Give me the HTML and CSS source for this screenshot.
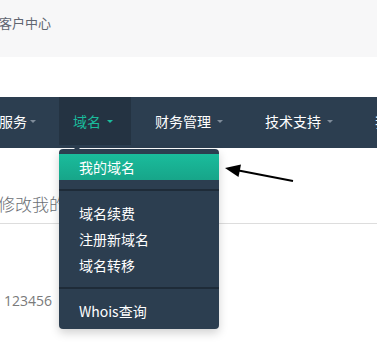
FILE: index.html
```html
<!DOCTYPE html>
<html lang="zh">
<head>
<meta charset="utf-8">
<title>域名</title>
<link rel="stylesheet" href="styles.css">
</head>
<body>
<div class="topbar"><span class="crumb">客户中心</span></div>
<div class="gap"></div>
<nav class="nav">
  <ul class="menu">
    <li class="item first"><span>服务</span><i class="caret"></i></li>
    <li class="item active"><span>域名</span><i class="caret"></i></li>
    <li class="item"><span>财务管理</span><i class="caret"></i></li>
    <li class="item"><span>技术支持</span><i class="caret"></i></li>
    <li class="item"><span>我的</span><i class="caret"></i></li>
  </ul>
</nav>
<main class="content">
  <h2 class="title">修改我的资料</h2>
  <div class="rule"></div>
  <p class="num">123456</p>

  <div class="dropdown">
    <i class="tip"></i>
    <a class="dd-item selected">我的域名</a>
    <div class="divider"></div>
    <a class="dd-item">域名续费</a>
    <a class="dd-item">注册新域名</a>
    <a class="dd-item">域名转移</a>
    <div class="divider"></div>
    <a class="dd-item">Whois查询</a>
  </div>
</main>
<svg class="pointer" width="377" height="347" viewBox="0 0 377 347">
  <line x1="293" y1="181" x2="236" y2="170" stroke="#000" stroke-width="2"/>
  <polygon points="225,168 241,164.5 238.5,177" fill="#000"/>
</svg>
</body>
</html>
```
FILE: styles.css
```css
* { box-sizing: border-box; }
html, body { margin: 0; padding: 0; }
body {
  width: 377px;
  height: 347px;
  overflow: hidden;
  background: #fff;
  font-family: "Noto Sans CJK SC", "Open Sans", sans-serif;
  position: relative;
}
.topbar {
  height: 57px;
  background: #f7f7f8;
  padding-top: 13px;
}
.crumb {
  display: block;
  margin-left: -1px;
  font-size: 13px;
  line-height: 20px;
  color: #5f6570;
}
.gap { height: 40px; }
.nav {
  height: 51px;
  background: #2c3e50;
  overflow: hidden;
}
.menu {
  list-style: none;
  margin: 0 0 0 -1px;
  padding: 0;
  display: flex;
  gap: 10px;
  white-space: nowrap;
}
.item {
  height: 48px;
  display: flex;
  align-items: center;
  padding: 0 18px 0 14px;
  color: #fff;
  font-size: 14px;
  flex: none;
}
.item.first { padding-left: 0; padding-right: 13px; }
.item.first .caret { margin-left: 3px; }
.item.active {
  background: #243342;
  color: #1abc9c;
}
.caret {
  width: 0;
  height: 0;
  margin-left: 6px;
  margin-top: 1px;
  border-left: 3px solid transparent;
  border-right: 3px solid transparent;
  border-top: 3px solid #7f8c9a;
}
.item.active .caret { border-top-color: #1abc9c; }
.content {
  position: relative;
}
.title {
  margin: 0 0 0 -2px;
  padding-top: 44px;
  font-size: 17px;
  line-height: 24px;
  font-weight: 300;
  color: #6b6f75;
}
.rule {
  margin-top: 7px;
  height: 1px;
  background: #dddddd;
}
.num {
  margin: 67px 0 0 4px;
  font-family: "Open Sans", sans-serif;
  font-size: 14px;
  line-height: 20px;
  color: #7a7a7a;
}
.dropdown {
  position: absolute;
  left: 59px;
  top: 1px;
  width: 160px;
  padding: 5px 0;
  background: #2c3e50;
  border-radius: 4px;
  box-shadow: 0 4px 10px rgba(0, 0, 0, 0.18);
}
.tip {
  position: absolute;
  left: 14px;
  top: -3px;
  width: 0;
  height: 0;
  border-left: 4px solid transparent;
  border-right: 4px solid transparent;
  border-bottom: 4px solid #2c3e50;
}
.dd-item {
  display: block;
  padding: 3px 20px;
  font-size: 14px;
  line-height: 20px;
  color: #fff;
}
.dd-item.selected {
  background: linear-gradient(#1abc9c, #17a589);
}
.divider {
  height: 2px;
  margin: 9px 0;
  background: #1e2b38;
}
.pointer {
  position: absolute;
  left: 0;
  top: 0;
  pointer-events: none;
}
```
